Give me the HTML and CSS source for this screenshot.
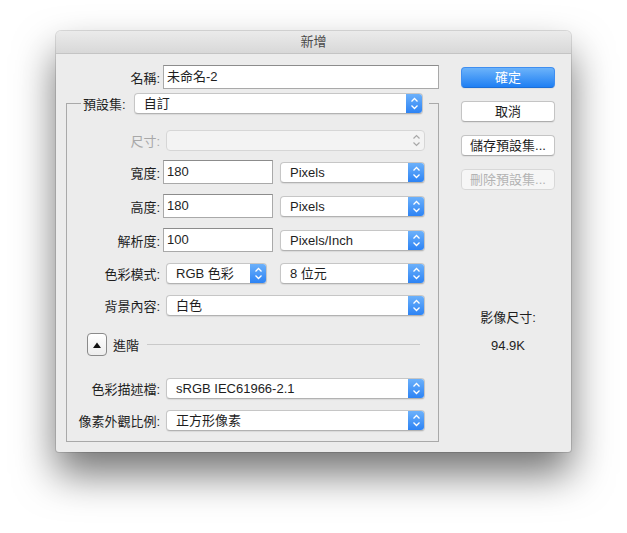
FILE: index.html
```html
<!DOCTYPE html>
<html lang="zh-Hant">
<head>
<meta charset="utf-8">
<title>新增</title>
<link rel="stylesheet" href="styles.css">
</head>
<body>
<div class="dialog">
  <div class="titlebar">新增</div>
  <div class="content">
    <div class="main">
      <div class="row name-row">
        <span class="label name-label">名稱:</span>
        <div class="field name-field">未命名-2</div>
      </div>
      <div class="group">
        <div class="group-head">
          <span class="label head-label">預設集:</span>
          <div class="popup w-head"><span class="popup-text">自訂</span><span class="arrow"><svg width="17" height="21" viewBox="0 0 17 21"><path d="M5.5 8.5 L8.5 5.5 L11.5 8.5 M5.5 12.5 L8.5 15.5 L11.5 12.5" fill="none" stroke="#fff" stroke-width="1.3"/></svg></span></div>
        </div>
        <div class="row r-size">
          <span class="label disabled-label">尺寸:</span>
          <div class="popup disabled w-wide"><span class="popup-text"></span><span class="arrow"><svg width="17" height="21" viewBox="0 0 17 21"><path d="M5.5 8.5 L8.5 5.5 L11.5 8.5 M5.5 12.5 L8.5 15.5 L11.5 12.5" fill="none" stroke="#a8a8a8" stroke-width="1.2"/></svg></span></div>
        </div>
        <div class="row r-field r-first">
          <span class="label">寬度:</span>
          <div class="field num-field">180</div>
          <div class="popup w-unit"><span class="popup-text">Pixels</span><span class="arrow"><svg width="17" height="21" viewBox="0 0 17 21"><path d="M5.5 8.5 L8.5 5.5 L11.5 8.5 M5.5 12.5 L8.5 15.5 L11.5 12.5" fill="none" stroke="#fff" stroke-width="1.3"/></svg></span></div>
        </div>
        <div class="row r-field">
          <span class="label">高度:</span>
          <div class="field num-field">180</div>
          <div class="popup w-unit"><span class="popup-text">Pixels</span><span class="arrow"><svg width="17" height="21" viewBox="0 0 17 21"><path d="M5.5 8.5 L8.5 5.5 L11.5 8.5 M5.5 12.5 L8.5 15.5 L11.5 12.5" fill="none" stroke="#fff" stroke-width="1.3"/></svg></span></div>
        </div>
        <div class="row r-field">
          <span class="label">解析度:</span>
          <div class="field num-field">100</div>
          <div class="popup w-unit"><span class="popup-text">Pixels/Inch</span><span class="arrow"><svg width="17" height="21" viewBox="0 0 17 21"><path d="M5.5 8.5 L8.5 5.5 L11.5 8.5 M5.5 12.5 L8.5 15.5 L11.5 12.5" fill="none" stroke="#fff" stroke-width="1.3"/></svg></span></div>
        </div>
        <div class="row r-pop r-mode">
          <span class="label">色彩模式:</span>
          <div class="popup w-mode"><span class="popup-text">RGB 色彩</span><span class="arrow"><svg width="17" height="21" viewBox="0 0 17 21"><path d="M5.5 8.5 L8.5 5.5 L11.5 8.5 M5.5 12.5 L8.5 15.5 L11.5 12.5" fill="none" stroke="#fff" stroke-width="1.3"/></svg></span></div>
          <div class="popup w-bits"><span class="popup-text">8 位元</span><span class="arrow"><svg width="17" height="21" viewBox="0 0 17 21"><path d="M5.5 8.5 L8.5 5.5 L11.5 8.5 M5.5 12.5 L8.5 15.5 L11.5 12.5" fill="none" stroke="#fff" stroke-width="1.3"/></svg></span></div>
        </div>
        <div class="row r-pop">
          <span class="label">背景內容:</span>
          <div class="popup w-wide"><span class="popup-text">白色</span><span class="arrow"><svg width="17" height="21" viewBox="0 0 17 21"><path d="M5.5 8.5 L8.5 5.5 L11.5 8.5 M5.5 12.5 L8.5 15.5 L11.5 12.5" fill="none" stroke="#fff" stroke-width="1.3"/></svg></span></div>
        </div>
        <div class="row disclosure">
          <div class="disc-btn"><svg width="10" height="8" viewBox="0 0 10 8"><path d="M1 7 L5 1.5 L9 7 Z" fill="#111"/></svg></div>
          <span class="disc-text">進階</span>
          <div class="disc-line"></div>
        </div>
        <div class="row r-pop r-profile">
          <span class="label">色彩描述檔:</span>
          <div class="popup w-wide"><span class="popup-text">sRGB IEC61966-2.1</span><span class="arrow"><svg width="17" height="21" viewBox="0 0 17 21"><path d="M5.5 8.5 L8.5 5.5 L11.5 8.5 M5.5 12.5 L8.5 15.5 L11.5 12.5" fill="none" stroke="#fff" stroke-width="1.3"/></svg></span></div>
        </div>
        <div class="row r-pop">
          <span class="label">像素外觀比例:</span>
          <div class="popup w-wide"><span class="popup-text">正方形像素</span><span class="arrow"><svg width="17" height="21" viewBox="0 0 17 21"><path d="M5.5 8.5 L8.5 5.5 L11.5 8.5 M5.5 12.5 L8.5 15.5 L11.5 12.5" fill="none" stroke="#fff" stroke-width="1.3"/></svg></span></div>
        </div>
      </div>
    </div>
    <div class="side">
      <div class="btn primary">確定</div>
      <div class="btn">取消</div>
      <div class="btn">儲存預設集...</div>
      <div class="btn btn-disabled">刪除預設集...</div>
      <div class="info">影像尺寸:</div>
      <div class="info-val">94.9K</div>
    </div>
  </div>
</div>
</body>
</html>
```

FILE: styles.css
```css
html, body {
  margin: 0;
  padding: 0;
  background: #ffffff;
}

body {
  width: 627px;
  height: 533px;
  overflow: hidden;
  font-family: "Liberation Sans", "Noto Sans CJK TC", sans-serif;
  font-size: 13px;
  color: #1e1e1e;
}

.dialog {
  margin: 31px 0 0 56px;
  width: 515px;
  height: 421px;
  box-sizing: border-box;
  background: #ececec;
  border-radius: 5px 5px 3px 3px;
  box-shadow: 0 0 0 1px rgba(0, 0, 0, 0.12), 0 22px 40px rgba(0, 0, 0, 0.55);
  overflow: hidden;
}

.titlebar {
  height: 22px;
  line-height: 22px;
  text-align: center;
  color: #4a4a4a;
  background: linear-gradient(#ebebeb, #d8d8d8);
  border-bottom: 1px solid #c4c4c4;
}

.content {
  display: flex;
}

.main {
  padding-left: 10px;
  width: 373px;
}

.row {
  display: flex;
  align-items: center;
}

.label {
  width: 93px;
  flex: none;
  text-align: right;
  white-space: nowrap;
}

.name-row {
  margin-top: 11px;
  height: 24px;
}

.name-label {
  width: 94px;
}

.field {
  height: 24px;
  box-sizing: border-box;
  background: #ffffff;
  border: 1px solid #a9a9a9;
  border-top-color: #8c8c8c;
  padding-left: 3px;
  line-height: 22px;
  flex: none;
}

.name-field {
  margin-left: 3px;
  width: 276px;
}

.num-field {
  margin-left: 3px;
  width: 110px;
}

.group {
  margin-top: 14px;
  width: 373px;
  height: 339px;
  box-sizing: border-box;
  border: 1px solid #a9a9a9;
}

.group-head {
  display: flex;
  align-items: center;
  margin-top: -12px;
  margin-left: 14px;
  padding: 0 6px 0 2px;
  width: fit-content;
  background: #ececec;
  height: 22px;
}

.head-label {
  width: auto;
  margin-right: 8px;
}

.popup {
  display: flex;
  height: 21px;
  box-sizing: border-box;
  background: #ffffff;
  border: 1px solid #c6c6c6;
  border-bottom-color: #b2b2b2;
  border-radius: 4px;
  box-shadow: 0 1px 1px rgba(0, 0, 0, 0.08);
  overflow: hidden;
  flex: none;
}

.popup-text {
  flex: 1;
  padding-left: 9px;
  line-height: 19px;
  white-space: nowrap;
}

.arrow {
  width: 17px;
  margin: -1px -1px -1px 0;
  display: flex;
  align-items: center;
  justify-content: center;
  background: linear-gradient(#6fb3fb, #2a81f4);
  border-radius: 0 4px 4px 0;
}

.popup.disabled {
  background: #f3f3f3;
  border-color: #d6d6d6;
  box-shadow: none;
}

.popup.disabled .arrow {
  background: transparent;
}

.disabled-label {
  color: #a8a8a8;
}

.w-head {
  width: 289px;
}

.w-wide {
  margin-left: 6px;
  width: 259px;
}

.w-unit {
  margin-left: 7px;
  width: 145px;
}

.w-mode {
  margin-left: 6px;
  width: 101px;
}

.w-bits {
  margin-left: 13px;
  width: 145px;
}

.r-size {
  margin-top: 16px;
  height: 21px;
}

.r-field {
  height: 24px;
  margin-top: 10px;
}

.r-first {
  margin-top: 9px;
}

.r-pop {
  height: 22px;
  margin-top: 10px;
}

.disclosure {
  margin-top: 17px;
  height: 23px;
  padding-left: 20px;
  padding-right: 18px;
}

.disc-btn {
  width: 20px;
  height: 23px;
  box-sizing: border-box;
  border: 1px solid #8a8a8a;
  border-radius: 4px;
  background: linear-gradient(#ffffff, #ededed);
  display: flex;
  align-items: center;
  justify-content: center;
  flex: none;
}

.disc-text {
  margin-left: 6px;
}

.disc-line {
  flex: 1;
  margin-left: 8px;
  height: 1px;
  background: #c9c9c9;
}

.r-profile {
  margin-top: 21px;
}

.side {
  margin-left: 22px;
  width: 94px;
  padding-top: 13px;
  display: flex;
  flex-direction: column;
}

.btn {
  height: 21px;
  box-sizing: border-box;
  margin-bottom: 13px;
  background: #ffffff;
  border: 1px solid #c4c4c4;
  border-bottom-color: #adadad;
  border-radius: 4px;
  text-align: center;
  line-height: 19px;
  white-space: nowrap;
  box-shadow: 0 1px 1px rgba(0, 0, 0, 0.06);
}

.primary {
  color: #ffffff;
  background: linear-gradient(#6cb3fa, #1f7ff3);
  border-color: #3f8ef0;
  border-bottom-color: #1c6ed6;
}

.btn-disabled {
  color: #b3b3b3;
  background: #f6f6f6;
  border-color: #d8d8d8;
  box-shadow: none;
}

.info {
  margin-top: 107px;
  text-align: center;
  line-height: 16px;
}

.info-val {
  margin-top: 12px;
  text-align: center;
  line-height: 16px;
}
```
